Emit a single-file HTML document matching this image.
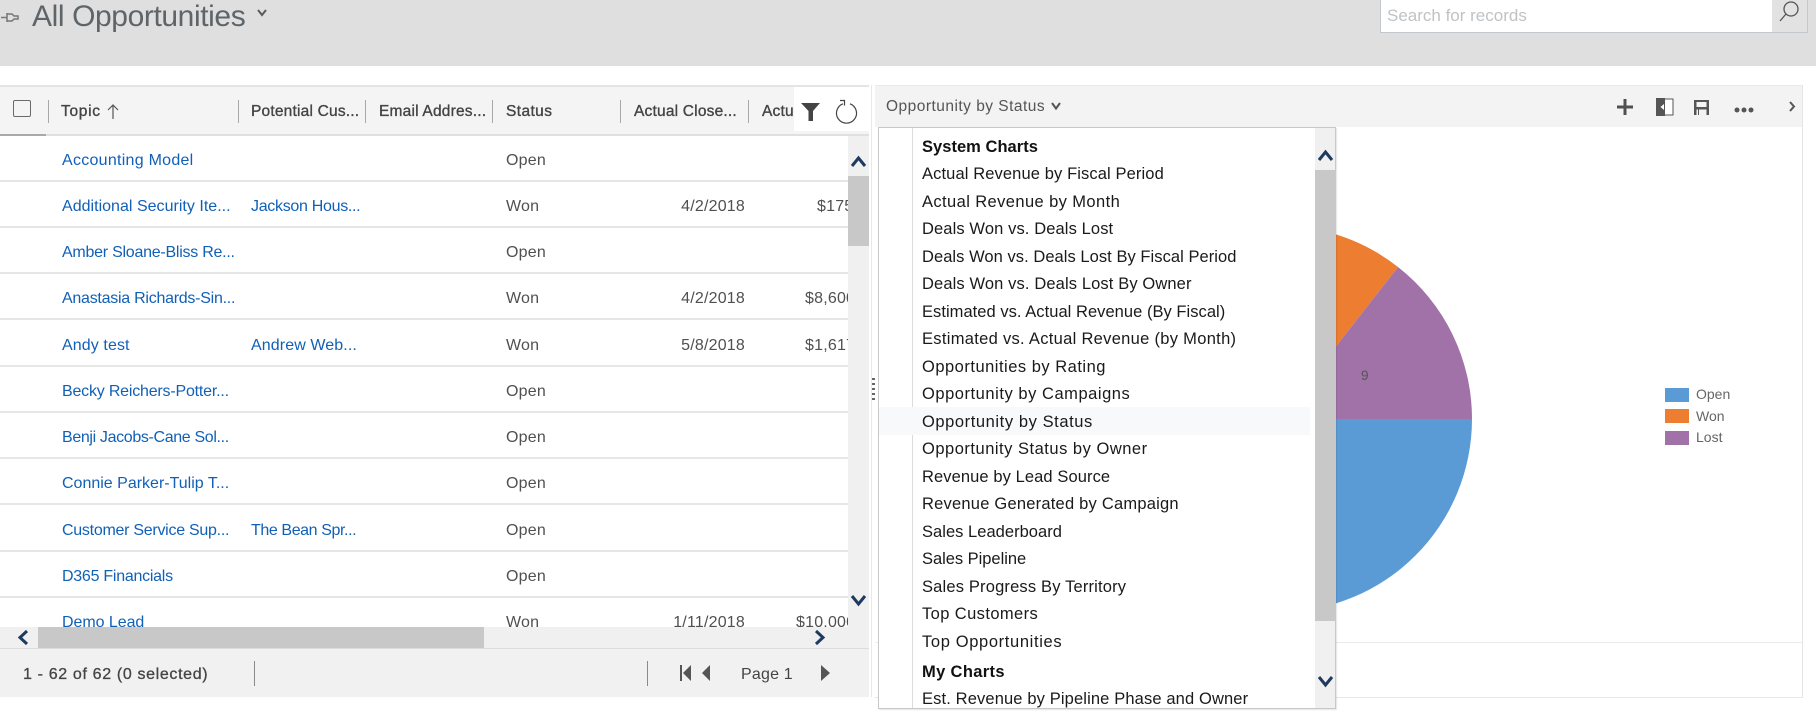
<!DOCTYPE html>
<html><head><meta charset="utf-8"><style>
html,body{margin:0;padding:0;background:#fff}
#p{position:relative;width:1816px;height:716px;overflow:hidden;background:#fff;font-family:"Liberation Sans",sans-serif;font-size:16px;color:#505050}
#p div,#p span,#p svg{position:absolute}
span{white-space:nowrap;line-height:20px;height:20px}
.l{color:#1160b7;left:62px}.c{color:#1160b7;left:251px}.s{left:506px;letter-spacing:.2px}
.d{right:1071px;letter-spacing:.2px}.a{letter-spacing:.2px}
.h{top:102px;color:#444;font-size:15.5px;-webkit-text-stroke:.35px #444;letter-spacing:.2px}
.r{left:0;width:848px;height:2px;background:#e6e6e6}
.v{top:100px;width:1px;height:23px;background:#a8a8a8}
.m{left:922px;color:#1a1a1a;font-size:16.5px}
</style></head><body><div id="p">
<div style="left:0;top:0;width:1816px;height:66px;background:#dfdfdf"></div>
<svg style="left:0;top:8px" width="24" height="20" viewBox="0 0 24 20" fill="none" stroke="#777" stroke-width="1.5"><path d="M1 9.500H7M7 5V14M7 6H12L14 8H18V11H14L12 13H7"/></svg>
<span style="left:32px;top:1px;height:32px;line-height:32px;font-size:30px;letter-spacing:-.4px;color:#5f6468">All Opportunities</span>
<svg style="left:256px;top:8px" width="12" height="10" viewBox="0 0 12 10" fill="none" stroke="#5a5a5a" stroke-width="2"><path d="M2 2L6 7L10 2"/></svg>
<div style="left:1380px;top:-2px;width:391px;height:33px;background:#fff;border:1px solid #c3c8cc"></div>
<div style="left:1772px;top:-2px;width:35px;height:33px;background:#e2e2e2;border:1px solid #c3c8cc;border-left:0"></div>
<span style="left:1387px;top:6px;font-size:17px;color:#bfc3c6">Search for records</span>
<svg style="left:1778px;top:0" width="24" height="24" viewBox="0 0 24 24" fill="none" stroke="#555" stroke-width="1.3"><circle cx="13" cy="9" r="7"/><path d="M8 14L2 21"/></svg>

<div style="left:0;top:85px;width:869px;height:50px;background:#f4f4f4;border-top:2px solid #e4e4e4;box-sizing:border-box"></div>
<div style="left:0;top:134px;width:869px;height:2px;background:#e0e0e0"></div>
<div style="left:0;top:134px;width:46px;height:2px;background:#a9a9a9"></div>
<div style="left:13px;top:100px;width:16px;height:15px;border:1.5px solid #6a6a6a;border-radius:2px"></div>
<div class="v" style="left:48px"></div><div class="v" style="left:238px"></div><div class="v" style="left:365px"></div><div class="v" style="left:492px"></div><div class="v" style="left:620px"></div><div class="v" style="left:748px"></div>
<span class="h" style="left:61px;letter-spacing:.7px">Topic</span>
<svg style="left:106px;top:103px" width="14" height="17" viewBox="0 0 14 17" fill="none" stroke="#555" stroke-width="1.2"><path d="M7 16V2M2 7L7 2L12 7"/></svg>
<span class="h" style="left:251px">Potential Cus...</span>
<span class="h" style="left:379px">Email Addres...</span>
<span class="h" style="left:506px;letter-spacing:.4px">Status</span>
<span class="h" style="left:634px">Actual Close...</span>
<span class="h" style="left:762px">Actu</span>
<div style="left:794px;top:87px;width:76px;height:44px;background:#fff"></div>
<svg style="left:800px;top:102px" width="22" height="20" viewBox="0 0 22 20" fill="#444"><path d="M1 1H20L13 9V19H8.500V9Z"/></svg>
<svg style="left:835px;top:99px" width="24" height="26" viewBox="0 0 24 26" fill="none" stroke="#444" stroke-width="1.2"><path d="M15 4.800A10 10 0 1 1 8 4.800M5 1.500H9.500V6.500"/></svg>

<div class="r" style="top:180px"></div><div class="r" style="top:226px"></div><div class="r" style="top:272px"></div><div class="r" style="top:318px"></div><div class="r" style="top:365px"></div><div class="r" style="top:411px"></div><div class="r" style="top:457px"></div><div class="r" style="top:503px"></div><div class="r" style="top:550px"></div><div class="r" style="top:596px"></div>

<span class="l" style="top:151px;letter-spacing:.27px">Accounting Model</span><span class="s" style="top:151px">Open</span>
<span class="l" style="top:197px;letter-spacing:.02px">Additional Security Ite...</span><span class="c" style="top:197px;letter-spacing:-.3px">Jackson Hous...</span><span class="s" style="top:197px">Won</span><span class="d" style="top:197px">4/2/2018</span><span class="a" style="left:817px;top:197px">$175</span>
<span class="l" style="top:243px;letter-spacing:-.25px">Amber Sloane-Bliss Re...</span><span class="s" style="top:243px">Open</span>
<span class="l" style="top:289px;letter-spacing:-.26px">Anastasia Richards-Sin...</span><span class="s" style="top:289px">Won</span><span class="d" style="top:289px">4/2/2018</span><span class="a" style="left:805px;top:289px">$8,600</span>
<span class="l" style="top:336px;letter-spacing:.1px">Andy test</span><span class="c" style="top:336px;letter-spacing:.1px">Andrew Web...</span><span class="s" style="top:336px">Won</span><span class="d" style="top:336px">5/8/2018</span><span class="a" style="left:805px;top:336px">$1,617</span>
<span class="l" style="top:382px;letter-spacing:-.2px">Becky Reichers-Potter...</span><span class="s" style="top:382px">Open</span>
<span class="l" style="top:428px;letter-spacing:-.35px">Benji Jacobs-Cane Sol...</span><span class="s" style="top:428px">Open</span>
<span class="l" style="top:474px;letter-spacing:0">Connie Parker-Tulip T...</span><span class="s" style="top:474px">Open</span>
<span class="l" style="top:521px;letter-spacing:-.27px">Customer Service Sup...</span><span class="c" style="top:521px;letter-spacing:-.4px">The Bean Spr...</span><span class="s" style="top:521px">Open</span>
<span class="l" style="top:567px;letter-spacing:-.26px">D365 Financials</span><span class="s" style="top:567px">Open</span>
<span class="l" style="top:613px;letter-spacing:-.05px">Demo Lead</span><span class="s" style="top:613px">Won</span><span class="d" style="top:613px">1/11/2018</span><span class="a" style="left:796px;top:613px">$10,000</span>

<div style="left:848px;top:136px;width:21px;height:491px;background:#f0f0f0"></div>
<div style="left:848px;top:176px;width:21px;height:70px;background:#c8c8c8"></div>
<svg style="left:850px;top:155px" width="17" height="13" viewBox="0 0 17 13" fill="none" stroke="#1f3a5f" stroke-width="3"><path d="M2 11L8.500 3L15 11"/></svg>
<svg style="left:850px;top:594px" width="17" height="13" viewBox="0 0 17 13" fill="none" stroke="#1f3a5f" stroke-width="3"><path d="M2 2L8.500 10L15 2"/></svg>

<div style="left:0;top:627px;width:869px;height:21px;background:#f0f0f0"></div>
<div style="left:38px;top:627px;width:446px;height:21px;background:#c8c8c8"></div>
<svg style="left:16px;top:629px" width="14" height="17" viewBox="0 0 14 17" fill="none" stroke="#1f3a5f" stroke-width="3"><path d="M11 2L4 8.500L11 15"/></svg>
<svg style="left:813px;top:629px" width="14" height="17" viewBox="0 0 14 17" fill="none" stroke="#1f3a5f" stroke-width="3"><path d="M3 2L10 8.500L3 15"/></svg>
<div style="left:0;top:648px;width:869px;height:49px;background:#f1f1f1;border-top:1px solid #dcdcdc;box-sizing:border-box"></div>
<span style="left:23px;top:665px;color:#444;-webkit-text-stroke:.3px #444;letter-spacing:.65px">1 - 62 of 62 (0 selected)</span>
<div style="left:254px;top:661px;width:1px;height:25px;background:#8a8a8a"></div>
<div style="left:647px;top:661px;width:1px;height:25px;background:#8a8a8a"></div>
<svg style="left:678px;top:663px" width="36" height="20" viewBox="0 0 36 20" fill="#555"><path d="M2 2H4V18H2ZM13 2V18L5 10ZM32 2V18L24 10Z"/></svg>
<span style="left:741px;top:665px;color:#444;letter-spacing:.2px">Page 1</span>
<svg style="left:819px;top:663px" width="14" height="20" viewBox="0 0 14 20" fill="#555"><path d="M2 2V18L11 10Z"/></svg>

<div style="left:871px;top:85px;width:1px;height:612px;background:#e8e8e8"></div>
<div style="left:872px;top:378px;width:3px;height:24px;background:repeating-linear-gradient(#666 0 2px,transparent 2px 5px)"></div>

<div style="left:875px;top:85px;width:927px;height:612px;background:#fff;border-right:1px solid #e4e4e4;border-bottom:1px solid #e8e8e8"></div>
<div style="left:875px;top:85px;width:927px;height:42px;background:#f3f3f3;border-top:1px solid #eaeaea;box-sizing:border-box"></div>
<span style="left:886px;top:97px;font-size:15.500px;color:#555;letter-spacing:.48px">Opportunity by Status</span>
<svg style="left:1050px;top:101px" width="12" height="10" viewBox="0 0 12 10" fill="none" stroke="#555" stroke-width="2"><path d="M2 2L6 7.500L10 2"/></svg>
<svg style="left:1617px;top:99px" width="16" height="16" viewBox="0 0 16 16" fill="#505050"><path d="M6.500 0H9.500V6.500H16V9.500H9.500V16H6.500V9.500H0V6.500H6.500Z"/></svg>
<svg style="left:1656px;top:98px" width="18" height="18" viewBox="0 0 18 18"><rect x="1" y="1" width="16" height="16" fill="#fff" stroke="#555"/><rect x="0" y="0" width="9" height="18" fill="#555"/><path d="M8 6V12L4.500 9Z" fill="#fff"/></svg>
<svg style="left:1693px;top:99px" width="17" height="17" viewBox="0 0 17 17" fill="#555"><path d="M1 1H16V16H1ZM3.500 3V8H13.500V3ZM3.500 10.500V16H5V10.500ZM6 11V16H13.500V10.500H6Z"/><rect x="6" y="10.500" width="7.500" height="6" fill="#f3f3f3"/></svg>
<svg style="left:1734px;top:106px" width="20" height="8" viewBox="0 0 20 8" fill="#555"><circle cx="3" cy="4" r="2.500"/><circle cx="10" cy="4" r="2.500"/><circle cx="17" cy="4" r="2.500"/></svg>
<svg style="left:1787px;top:100px" width="10" height="13" viewBox="0 0 10 13" fill="none" stroke="#555" stroke-width="2"><path d="M3 2L7 6.500L3 11"/></svg>

<svg style="left:0;top:0" width="1816" height="716">
<path d="M1279 419L1472 419A193 193 0 0 1 1086 419Z" fill="#5b9bd5"/>
<path d="M1279 419L1398 267A193 193 0 0 1 1472 419Z" fill="#a172a8"/>
<path d="M1279 419L1201 242A193 193 0 0 1 1398 267Z" fill="#ed7d31"/>
</svg>
<span style="left:1361px;top:366px;font-size:13.500px;color:#555">9</span>
<div style="left:875px;top:642px;width:927px;height:1px;background:#ececec"></div>

<div style="left:1665px;top:388px;width:24px;height:14px;background:#5b9bd5"></div>
<div style="left:1665px;top:409px;width:24px;height:14px;background:#ed7d31"></div>
<div style="left:1665px;top:431px;width:24px;height:14px;background:#a172a8"></div>
<span style="left:1696px;top:384px;font-size:14px;color:#666">Open</span>
<span style="left:1696px;top:406px;font-size:14px;color:#666">Won</span>
<span style="left:1696px;top:427px;font-size:14px;color:#666">Lost</span>

<div style="left:878px;top:127px;width:458px;height:582px;background:#fff;border:1px solid #c8c8c8;box-shadow:1px 1px 1px rgba(0,0,0,.1);box-sizing:border-box"></div>
<div style="left:912px;top:128px;width:1px;height:580px;background:#dcdcdc"></div>
<div style="left:879px;top:407px;width:431px;height:28px;background:#f8f9fb"></div>
<div style="left:1315px;top:128px;width:20px;height:580px;background:#f0f0f0"></div>
<div style="left:1315px;top:170px;width:20px;height:451px;background:#c8c8c8"></div>
<svg style="left:1317px;top:149px" width="17" height="13" viewBox="0 0 17 13" fill="none" stroke="#1f3a5f" stroke-width="3"><path d="M2 11L8.500 3L15 11"/></svg>
<svg style="left:1317px;top:675px" width="17" height="13" viewBox="0 0 17 13" fill="none" stroke="#1f3a5f" stroke-width="3"><path d="M2 2L8.500 10L15 2"/></svg>
<span class="m" style="top:137px;font-weight:bold;color:#111;letter-spacing:.03px">System Charts</span>
<span class="m" style="top:164px;letter-spacing:.11px">Actual Revenue by Fiscal Period</span>
<span class="m" style="top:192px;letter-spacing:.4px">Actual Revenue by Month</span>
<span class="m" style="top:219px;letter-spacing:.11px">Deals Won vs. Deals Lost</span>
<span class="m" style="top:247px;letter-spacing:.05px">Deals Won vs. Deals Lost By Fiscal Period</span>
<span class="m" style="top:274px;letter-spacing:.12px">Deals Won vs. Deals Lost By Owner</span>
<span class="m" style="top:302px;letter-spacing:.04px">Estimated vs. Actual Revenue (By Fiscal)</span>
<span class="m" style="top:329px;letter-spacing:.3px">Estimated vs. Actual Revenue (by Month)</span>
<span class="m" style="top:357px;letter-spacing:.5px">Opportunities by Rating</span>
<span class="m" style="top:384px;letter-spacing:.54px">Opportunity by Campaigns</span>
<span class="m" style="top:412px;letter-spacing:.58px">Opportunity by Status</span>
<span class="m" style="top:439px;letter-spacing:.51px">Opportunity Status by Owner</span>
<span class="m" style="top:467px;letter-spacing:.09px">Revenue by Lead Source</span>
<span class="m" style="top:494px;letter-spacing:.22px">Revenue Generated by Campaign</span>
<span class="m" style="top:522px;letter-spacing:.03px">Sales Leaderboard</span>
<span class="m" style="top:549px;letter-spacing:-.03px">Sales Pipeline</span>
<span class="m" style="top:577px;letter-spacing:.17px">Sales Progress By Territory</span>
<span class="m" style="top:604px;letter-spacing:.4px">Top Customers</span>
<span class="m" style="top:632px;letter-spacing:.64px">Top Opportunities</span>
<span class="m" style="top:662px;font-weight:bold;color:#111;letter-spacing:.35px">My Charts</span>
<span class="m" style="top:689px;letter-spacing:.13px">Est. Revenue by Pipeline Phase and Owner</span>
</div></body></html>
